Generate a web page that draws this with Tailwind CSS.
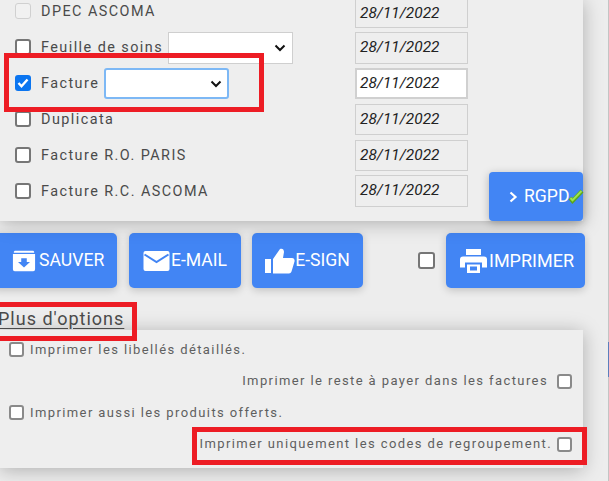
<!DOCTYPE html>
<html><head><meta charset="utf-8">
<script src="https://cdn.jsdelivr.net/npm/@tailwindcss/browser@4"></script>
</head>
<body class="w-[609px] h-[481px] overflow-hidden relative bg-[#ededed] font-['Roboto',sans-serif] text-[#333]">
<div class="absolute right-0 top-0 bottom-0 w-[1px] bg-[#c4c4c4]"></div>
<div class="absolute right-0 top-[342px] h-[35px] w-[1px] bg-[#5c7fbd]"></div>
<!-- top panel -->
<section class="relative w-[583px] h-[221px] bg-[#eeeeee] shadow-[0_2px_18px_rgba(0,0,0,0.27)]">
  <div class="h-[221px] overflow-hidden">
  <div class="-mt-[7px] flex flex-col text-[14.4px] tracking-[1.45px] text-[#4a4a4a]">
    <div class="h-[36px] flex items-center pl-[15px] relative">
      <span class="w-[16px] h-[16px] rounded-[3px] border border-[#d0d0d0] bg-[#f1f1f1]"></span>
      <span class="ml-[10px] mt-[2px]">DPEC ASCOMA</span>
      <span class="absolute left-[355px] top-[6px] w-[113px] h-[29px] border border-[#cfcfcf] bg-[#eeeeee] italic tracking-normal text-[#222] text-[15.4px] pl-[4px] flex items-center">28/11/2022</span>
    </div>
    <div class="h-[36px] flex items-center pl-[15px] relative">
      <span class="w-[16px] h-[16px] rounded-[3px] border-2 border-[#767676] bg-white"></span>
      <span class="ml-[10px] mt-[2px]">Feuille de soins</span>
      <span class="absolute left-[168px] top-[3px] w-[125px] h-[32px] border border-[#cfcfcf] bg-white flex items-center justify-end pr-[6px]"><svg width="12" height="8" viewBox="0 0 12 8"><path d="M1.5 1.5 6 6l4.5-4.5" fill="none" stroke="#111" stroke-width="2"/></svg></span>
      <span class="absolute left-[355px] top-[3px] w-[113px] h-[32px] border border-[#cfcfcf] bg-[#eeeeee] italic tracking-normal text-[#222] text-[15.4px] pl-[4px] flex items-center">28/11/2022</span>
    </div>
    <div class="h-[36px] flex items-center pl-[15px] relative">
      <span class="w-[16px] h-[16px] rounded-[3px] bg-[#0b75f0] flex items-center justify-center"><svg width="12" height="10" viewBox="0 0 12 10"><path d="M1.5 5 4.500 8.200 10.500 1.500" fill="none" stroke="#fff" stroke-width="2.4"/></svg></span>
      <span class="ml-[10px] mt-[2px]">Facture</span>
      <span class="absolute left-[104px] top-[3px] w-[125px] h-[31px] rounded-[3px] border-2 border-[#7db8f5] bg-white flex items-center justify-end pr-[5px]"><svg width="12" height="8" viewBox="0 0 12 8"><path d="M1.5 1.5 6 6l4.5-4.5" fill="none" stroke="#111" stroke-width="2"/></svg></span>
      <span class="absolute left-[355px] top-[3px] w-[113px] h-[31px] border-2 border-[#d0d0d0] bg-white italic tracking-normal text-[#222] text-[15.4px] pl-[3px] flex items-center">28/11/2022</span>
    </div>
    <div class="h-[36px] flex items-center pl-[15px] relative">
      <span class="w-[16px] h-[16px] rounded-[3px] border-2 border-[#767676] bg-white"></span>
      <span class="ml-[10px] mt-[2px]">Duplicata</span>
      <span class="absolute left-[355px] top-[3px] w-[113px] h-[31px] border border-[#cfcfcf] bg-[#eeeeee] italic tracking-normal text-[#222] text-[15.4px] pl-[4px] flex items-center">28/11/2022</span>
    </div>
    <div class="h-[36px] flex items-center pl-[15px] relative">
      <span class="w-[16px] h-[16px] rounded-[3px] border-2 border-[#767676] bg-white"></span>
      <span class="ml-[10px] mt-[2px]">Facture R.O. PARIS</span>
      <span class="absolute left-[355px] top-[3px] w-[113px] h-[31px] border border-[#cfcfcf] bg-[#eeeeee] italic tracking-normal text-[#222] text-[15.4px] pl-[4px] flex items-center">28/11/2022</span>
    </div>
    <div class="h-[36px] flex items-center pl-[15px] relative">
      <span class="w-[16px] h-[16px] rounded-[3px] border-2 border-[#767676] bg-white"></span>
      <span class="ml-[10px] mt-[2px]">Facture R.C. ASCOMA</span>
      <span class="absolute left-[355px] top-[2px] w-[113px] h-[32px] border border-[#cfcfcf] bg-[#eeeeee] italic tracking-normal text-[#222] text-[15.4px] pl-[4px] flex items-center">28/11/2022</span>
    </div>
  </div>
  </div>
  <button class="absolute left-[489px] top-[172px] w-[94px] h-[49px] rounded-[4px] bg-[#4285f4] text-white text-[17.6px] flex items-center pl-[20px] shadow-[0_2px_8px_rgba(0,0,0,0.25)]">
    <svg width="9" height="12" viewBox="0 0 9 12" class="mr-[6px]"><path d="M1.5 1.500 6.500 6l-5 4.500" fill="none" stroke="#fff" stroke-width="2.2"/></svg>RGPD
    <svg width="16" height="16" viewBox="0 0 16 16" class="absolute left-[79px] top-[16px]"><path d="M2 10 4.500 13 14 3" fill="none" stroke="#5aa51c" stroke-width="4"/><path d="M2.500 10 4.500 12.300 13.500 3" fill="none" stroke="#9be24f" stroke-width="2"/></svg>
  </button>
</section>
<!-- buttons -->
<div class="flex items-center mt-[12px] h-[55px] -ml-[8px] text-white text-[17.6px]">
  <button class="w-[125px] h-[55px] rounded-[5px] bg-[#4285f4] flex items-center justify-start pl-[20px] gap-[3px] shadow-[0_2px_8px_rgba(0,0,0,0.2)]">
    <svg width="24" height="24" viewBox="0 0 26 24"><path d="M3 1h20a2 2 0 0 1 1 1v1H2V2a2 2 0 0 1 1-1Z M1 4.500h24V21a2 2 0 0 1-2 2H3a2 2 0 0 1-2-2Z" fill="#fff"/><path d="M10 9h6v4h3.500L13 19l-6.500-6H10Z" fill="#4285f4"/></svg>SAUVER
  </button>
  <button class="ml-[12px] w-[112px] h-[55px] rounded-[5px] bg-[#4285f4] flex items-center justify-center gap-[1px] shadow-[0_2px_8px_rgba(0,0,0,0.2)]">
    <svg width="27" height="20" viewBox="0 0 26 20"><path d="M2 0h22a2 2 0 0 1 2 2v16a2 2 0 0 1-2 2H2a2 2 0 0 1-2-2V2a2 2 0 0 1 2-2Z" fill="#fff"/><path d="M1 3.500 13 11l12-7.500" fill="none" stroke="#4285f4" stroke-width="2"/></svg>E-MAIL
  </button>
  <button class="ml-[11px] w-[111px] h-[55px] rounded-[5px] bg-[#4285f4] flex items-center justify-center gap-0 shadow-[0_2px_8px_rgba(0,0,0,0.2)]">
    <svg width="30" height="26" viewBox="0 0 30 26"><path d="M0 11h6v14H0Z M8 11l7-10c2-1 4 0 4 3l-1 6h9c2 0 3 2 2.500 3.500l-3 10c-.4 1.200-1.500 2-2.500 2H8Z" fill="#fff"/></svg>E-SIGN
  </button>
  <span class="ml-[55px] w-[17px] h-[17px] rounded-[3px] border-2 border-[#767676] bg-white"></span>
  <button class="ml-[11px] w-[139px] h-[55px] rounded-[5px] bg-[#4285f4] flex items-center justify-start pl-[14px] gap-[2px] text-[18px] shadow-[0_2px_8px_rgba(0,0,0,0.2)]">
    <svg width="27" height="24" viewBox="0 0 27 24"><path d="M6 0h15v6H6Z" fill="#fff"/><path d="M3 7.500h21a3 3 0 0 1 3 3v8h-5v-5H5v5H0v-8a3 3 0 0 1 3-3Z" fill="#fff"/><path d="M7 15.500h13V24H7Zm3 2v4h7v-4Z" fill="#fff" fill-rule="evenodd"/></svg>IMPRIMER
  </button>
</div>
<!-- heading -->
<h2 class="mt-[21px] h-[20px] -ml-[2px] text-[18px] leading-[20px] tracking-[1px] underline underline-offset-[3px] text-[#4a4a4a] font-normal">Plus d'options</h2>
<!-- options panel -->
<section class="mt-[1px] w-[583px] h-[138px] bg-[#eeeeee] shadow-[0_2px_18px_rgba(0,0,0,0.27)] text-[13px] tracking-[1.4px] text-[#5f5f5f] flex flex-col">
  <label class="h-[31px] mt-[4px] flex items-center pl-[9px] gap-[6px]"><span class="w-[15px] h-[15px] rounded-[3px] border-2 border-[#8a8a8a] bg-white"></span>Imprimer les libellés détaillés.</label>
  <label class="h-[32px] flex items-center justify-end pr-[11px] gap-[9px]">Imprimer le reste à payer dans les factures<span class="w-[15px] h-[15px] rounded-[3px] border-2 border-[#8a8a8a] bg-white"></span></label>
  <label class="h-[31px] flex items-center pl-[9px] gap-[6px]"><span class="w-[15px] h-[15px] rounded-[3px] border-2 border-[#8a8a8a] bg-white"></span>Imprimer aussi les produits offerts.</label>
  <label class="h-[32px] flex items-center justify-end pr-[11px] gap-[5px]">Imprimer uniquement les codes de regroupement.<span class="w-[15px] h-[15px] rounded-[3px] border-2 border-[#8a8a8a] bg-white"></span></label>
</section>
<!-- red annotation frames -->
<div class="absolute left-[4px] top-[53px] w-[260px] h-[59px] border-[5px] border-[#ed1c24]"></div>
<div class="absolute left-[-5px] top-[302px] w-[142px] h-[39px] border-[5px] border-[#ed1c24]"></div>
<div class="absolute left-[192px] top-[427px] w-[395px] h-[38px] border-[5px] border-[#ed1c24]"></div>
</body></html>
